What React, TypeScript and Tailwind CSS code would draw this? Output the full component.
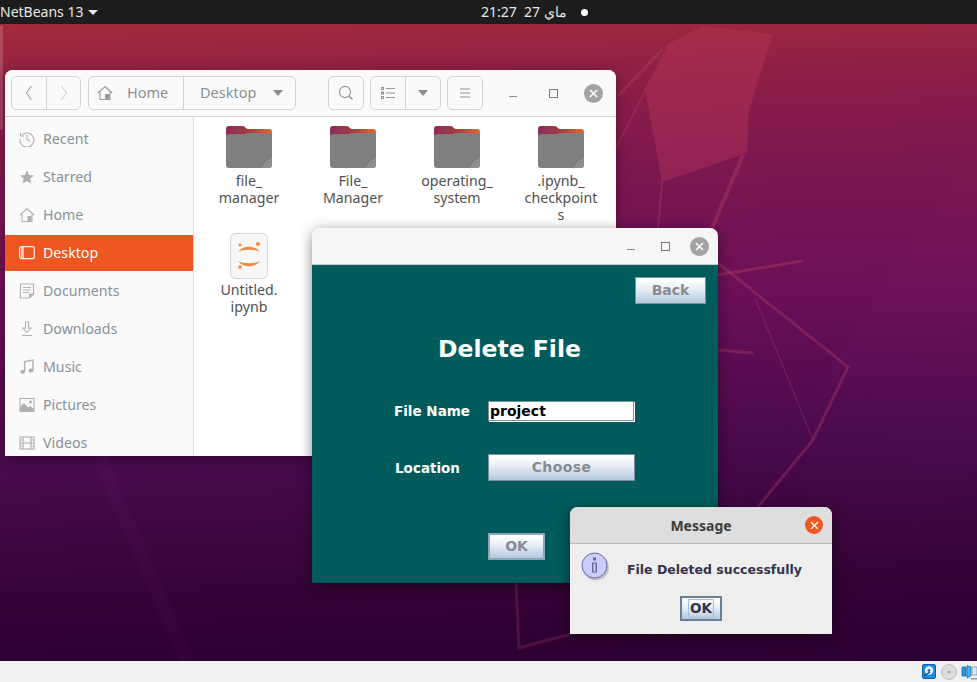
import React from "react";

const ui = "font-['Noto_Sans','Open_Sans',sans-serif]";
const java = "font-['DejaVu_Sans',sans-serif]";

function Wallpaper() {
  return (
    <svg className="absolute inset-0 h-full w-full" viewBox="0 0 977 637" fill="none">
      <defs>
        <linearGradient id="sheen" x1="1" y1="0.1" x2="0.55" y2="1">
          <stop offset="0" stopColor="#ff5a6a" stopOpacity="0.03" />
          <stop offset="0.5" stopColor="#7a1a80" stopOpacity="0.1" />
          <stop offset="1" stopColor="#000" stopOpacity="0" />
        </linearGradient>
      </defs>
      <path d="M977 120 L977 440 L800 637 L640 637 Z" fill="url(#sheen)" opacity="0.5" />
      <g transform="translate(0,-24)">
        <path d="M668 44 L703 26 L773 34 L749 110 L747 153 L662 182 L645 89 Z" fill="#c9405f" fillOpacity="0.3" />
        <g stroke="#c24a6e" strokeOpacity="0.3">
          <path d="M663 49 L618 96" strokeWidth="3" />
          <path d="M645 91 L617 147" strokeWidth="1.5" />
          <path d="M662 182 L658 228" strokeWidth="2" />
          <path d="M743 155 L712 228" strokeWidth="4" />
          <path d="M718 263 L848 367 L813 440 L757 508" strokeWidth="3" />
          <path d="M755 298 L813 440" strokeWidth="1.2" />
          <path d="M718 275 L802 261" strokeWidth="3" />
          <path d="M718 350 L753 353" strokeWidth="3" />
          <path d="M516 583 L519 648 L578 632" strokeWidth="3" strokeOpacity="0.22" />
        </g>
        <path d="M99 457 L187 661" stroke="#a0409a" strokeOpacity="0.05" strokeWidth="14" />
        <path d="M1.5 26 L1.5 130" stroke="#e8b0b8" strokeOpacity="0.25" strokeWidth="3" />
      </g>
    </svg>
  );
}

function Folder() {
  return (
    <svg width="46" height="42" viewBox="0 0 46 42">
      <defs>
        <linearGradient id="tab" x1="0" y1="0" x2="1" y2="0">
          <stop offset="0" stopColor="#8a2a58" />
          <stop offset="0.55" stopColor="#a8433f" />
          <stop offset="1" stopColor="#e9662c" />
        </linearGradient>
      </defs>
      <path d="M3 0 H17 C19 0 20 3 22 3 H43 C45 3 46 4 46 6 V20 H0 V3 C0 1 1 0 3 0 Z" fill="url(#tab)" />
      <path d="M3 8 H18 C20 8 21 7 23 7 H43 C45 7 46 8 46 10 V39 C46 41 45 42 43 42 H3 C1 42 0 41 0 39 V10 C0 9 1 8 3 8 Z" fill="#7f7f7f" />
      <path d="M46 30 L34 42 H43 C45 42 46 41 46 39 Z" fill="#8e8e8e" />
    </svg>
  );
}

function Jupyter() {
  return (
    <svg width="38" height="46" viewBox="0 0 38 46">
      <rect x="0.5" y="0.5" width="37" height="45" rx="5" fill="#f7f7f7" stroke="#d2d2d2" />
      <path d="M8 19 C13 12 25 12 30 19 C25 16 13 16 8 19 Z" fill="#f08a45" />
      <path d="M8 28 C13 35 25 35 30 28 C25 31 13 31 8 28 Z" fill="#f08a45" />
      <circle cx="10" cy="12" r="1.6" fill="#f08a45" />
      <circle cx="28" cy="11" r="2" fill="#f08a45" />
      <circle cx="10" cy="34" r="1.8" fill="#f08a45" />
    </svg>
  );
}

const s = { stroke: "#b0b0b0", fill: "none", strokeWidth: 1.1 };

function SideIcon({ name }: { name: string }) {
  const c = "#b0b0b0";
  return (
    <svg width="16" height="16" viewBox="0 0 16 16" className="shrink-0">
      {name === "Recent" && (
        <g {...s}>
          <path d="M2.6 4.5 A7 7 0 1 1 1 8" />
          <path d="M1.5 1.8 V5 H4.7" />
          <path d="M8 4 V8.2 L10.8 10" />
        </g>
      )}
      {name === "Starred" && <path d="M8 1.3 L10 6 L15 6.4 L11.2 9.6 L12.4 14.6 L8 12 L3.6 14.6 L4.8 9.6 L1 6.4 L6 6 Z" fill={c} />}
      {name === "Home" && (
        <g {...s}>
          <path d="M1 8 L8 1.5 L15 8" />
          <path d="M3 6.5 V14.5 H13 V6.5" />
          <path d="M9 14.5 V9.5 H12 V14.5" fill={c} />
        </g>
      )}
      {name === "Desktop" && (
        <g>
          <rect x="0.7" y="1.7" width="14.6" height="12" rx="2" fill="none" stroke="#fff" strokeWidth="1.2" opacity="0.9" />
          <path d="M2 2 H5 V13.5 H2 Z" fill="#fff" opacity="0.65" />
        </g>
      )}
      {name === "Documents" && (
        <g {...s}>
          <path d="M1.5 1 H14.5 V11 L10.5 15 H1.5 Z" />
          <path d="M4 4.5 H12 M4 7 H12 M4 9.5 H10" />
          <path d="M10.5 15 V11 H14.5" fill={c} />
        </g>
      )}
      {name === "Downloads" && (
        <g {...s}>
          <path d="M6.5 1 H9.5 V7 H12 L8 11.5 L4 7 H6.5 Z" />
          <path d="M3 14.5 H13" />
        </g>
      )}
      {name === "Music" && (
        <g>
          <path d="M5.6 12.5 V2.5 L14 1 V11" fill="none" stroke={c} strokeWidth="1.4" />
          <ellipse cx="3.6" cy="12.8" rx="2.4" ry="2" fill={c} />
          <ellipse cx="12" cy="11.5" rx="2.4" ry="2" fill={c} />
        </g>
      )}
      {name === "Pictures" && (
        <g>
          <rect x="1" y="1.5" width="14" height="13" fill="none" stroke={c} strokeWidth="1.1" />
          <path d="M1 14.5 V10 L5 6 L9 10.5 L11 9 L15 12 V14.5 Z" fill={c} />
          <circle cx="11.5" cy="5" r="1.4" fill={c} />
        </g>
      )}
      {name === "Videos" && (
        <g {...s}>
          <rect x="1" y="2" width="14" height="12" />
          <path d="M4 2 V14 M12 2 V14 M1 5 H4 M1 8 H4 M1 11 H4 M12 5 H15 M12 8 H15 M12 11 H15 M4 8 H12" />
        </g>
      )}
    </svg>
  );
}

function HeaderBtn({ className, children }: { className?: string; children?: React.ReactNode }) {
  return <div className={`flex h-[34px] items-center justify-center border border-[#d4d4d4] bg-[#fafafa] ${className ?? ""}`}>{children}</div>;
}

function WinControls({ gapA, gapB }: { gapA: string; gapB: string }) {
  return (
    <div className="flex items-center">
      <div className="mt-[6px] h-px w-2 bg-[#8a8a8a]" />
      <div className={`h-[9px] w-[9px] border border-[#7a7a7a] ${gapA}`} />
      <div className={`flex h-[19px] w-[19px] items-center justify-center rounded-full bg-[#a3a3a3] ${gapB}`}>
        <svg width="9" height="9" viewBox="0 0 9 9" stroke="#fff" strokeWidth="1.5"><path d="M1 1 L8 8 M8 1 L1 8" /></svg>
      </div>
    </div>
  );
}

function FilesWindow() {
  const items = ["Recent", "Starred", "Home", "Desktop", "Documents", "Downloads", "Music", "Pictures", "Videos"];
  const files = [
    ["file_", "manager"],
    ["File_", "Manager"],
    ["operating_", "system"],
    [".ipynb_", "checkpoint", "s"],
  ];
  return (
    <div className={`absolute left-[5px] top-[46px] flex h-[386px] w-[611px] flex-col overflow-hidden rounded-t-[8px] bg-white shadow-[0_3px_14px_rgba(0,0,0,0.35)] ${ui}`}>
      <div className="flex h-[47px] shrink-0 items-center border-b border-[#d2d2d2] bg-[#fafafa] pl-[6px] pr-[13px]">
        <HeaderBtn className="w-[70px] justify-start rounded-[5px] !items-stretch">
          <div className="flex w-[35px] items-center justify-center border-r border-[#d4d4d4]">
            <svg width="8" height="16" viewBox="0 0 8 16" fill="none" stroke="#8c8c8c"><path d="M6.5 1 L1.5 8 L6.5 15" /></svg>
          </div>
          <div className="flex flex-1 items-center justify-center">
            <svg width="8" height="16" viewBox="0 0 8 16" fill="none" stroke="#c4c4c4"><path d="M1.5 1 L6.5 8 L1.5 15" /></svg>
          </div>
        </HeaderBtn>
        <HeaderBtn className="ml-[7px] w-[208px] justify-start rounded-[5px] !items-stretch text-[14.5px] text-[#8b9094]">
          <div className="flex w-[95px] items-center border-r border-[#d4d4d4] pl-[8px]">
            <svg width="16" height="16" viewBox="0 0 16 16" fill="none" stroke="#9a9a9a" strokeWidth="1.1">
              <path d="M0.8 8 L8 1.5 L15.2 8" />
              <path d="M3 6.5 V14.5 H13 V6.5" />
              <path d="M8.5 14.5 V9.5 H12 V14.5" fill="#9a9a9a" />
            </svg>
            <span className="ml-[14px]">Home</span>
          </div>
          <div className="flex flex-1 items-center pl-[16px]">
            <span>Desktop</span>
            <svg className="ml-[17px]" width="10" height="6" viewBox="0 0 10 6" fill="#8c8c8c"><path d="M0 0 H10 L5 6 Z" /></svg>
          </div>
        </HeaderBtn>
        <HeaderBtn className="ml-[32px] w-[36px] rounded-[5px]">
          <svg width="16" height="16" viewBox="0 0 16 16" fill="none" stroke="#949494" strokeWidth="1.1">
            <circle cx="7" cy="7" r="5.6" />
            <path d="M11 11 L14.5 14.5" strokeWidth="1.5" />
          </svg>
        </HeaderBtn>
        <HeaderBtn className="ml-[6px] w-[71px] rounded-[5px] !items-stretch">
          <div className="flex w-[35px] items-center justify-center border-r border-[#d4d4d4]">
            <svg width="14" height="12" viewBox="0 0 14 12" fill="none" stroke="#949494">
              <path d="M5 1.5 H14 M5 6 H14 M5 10.5 H14" />
              <rect x="0.5" y="0.5" width="2" height="2" />
              <rect x="0.5" y="5" width="2" height="2" />
              <rect x="0.5" y="9.5" width="2" height="2" />
            </svg>
          </div>
          <div className="flex flex-1 items-center justify-center">
            <svg width="10" height="6" viewBox="0 0 10 6" fill="#8c8c8c"><path d="M0 0 H10 L5 6 Z" /></svg>
          </div>
        </HeaderBtn>
        <HeaderBtn className="ml-[6px] w-[36px] rounded-[5px]">
          <svg width="12" height="10" viewBox="0 0 12 10" stroke="#949494"><path d="M1 1 H11 M1 5 H11 M1 9 H11" /></svg>
        </HeaderBtn>
        <div className="ml-auto">
          <WinControls gapA="ml-[32px]" gapB="ml-[26px]" />
        </div>
      </div>
      <div className="flex min-h-0 flex-1">
        <div className="w-[189px] shrink-0 border-r border-[#dcdcdc] bg-[#fafafa] pt-[3px] text-[14.2px]">
          {items.map((n) => (
            <div
              key={n}
              className={
                n === "Desktop"
                  ? "my-px flex h-[36px] items-center gap-[8px] bg-[#ee5622] pl-[14px] text-white"
                  : "flex h-[38px] items-center gap-[8px] pl-[14px] text-[#86929a]"
              }
            >
              <SideIcon name={n} />
              <span>{n}</span>
            </div>
          ))}
        </div>
        <div className="flex-1 pl-[3px] pt-[9px]">
          <div className="grid w-[416px] grid-cols-[repeat(4,104px)] auto-rows-[107px] text-[14.2px] leading-[17px] text-[#505050]">
            {files.map((f) => (
              <div key={f[0]} className="flex flex-col items-center">
                <Folder />
                <div className="mt-[4px] text-center">
                  {f.map((l) => (
                    <div key={l}>{l}</div>
                  ))}
                </div>
              </div>
            ))}
            <div className="flex flex-col items-center">
              <Jupyter />
              <div className="mt-[2px] text-center">
                <div>Untitled.</div>
                <div>ipynb</div>
              </div>
            </div>
          </div>
        </div>
      </div>
    </div>
  );
}

const metalBtn = "flex items-center justify-center bg-[linear-gradient(to_bottom,#ffffff_5%,#e6edf5_45%,#b4c9de_100%)] font-bold";

function DeleteWindow() {
  return (
    <div className={`absolute left-[312px] top-[204px] flex h-[355px] w-[406px] flex-col overflow-hidden rounded-t-[8px] shadow-[0_3px_14px_rgba(0,0,0,0.45)] ${java}`}>
      <div className="flex h-[37px] shrink-0 items-center justify-end border-b border-[#c8c8c8] bg-[#f6f6f6] pr-[9px]">
        <WinControls gapA="ml-[26px]" gapB="ml-[20px]" />
      </div>
      <div className="flex-1 bg-[#005c5c] pt-[12px]">
        <div className="flex justify-end pr-[12px]">
          <div className={`${metalBtn} h-[27px] w-[71px] border border-[#7d8fa0] text-[14px] text-[#868c92]`}>Back</div>
        </div>
        <div className="mt-[30px] pl-[126px] text-[23.5px] font-bold leading-[30px] text-white">Delete File</div>
        <div className="mt-[37px] flex items-center pl-[82px]">
          <div className="w-[94px] text-[13.5px] font-bold text-white">File Name</div>
          <div className="flex h-[20px] w-[146px] items-center border border-[#7d8fa0] bg-white pl-px text-[14px] font-bold leading-none text-black shadow-[1px_1px_0_#fff]">project</div>
        </div>
        <div className="mt-[33px] flex items-center pl-[83px]">
          <div className="w-[93px] text-[13.5px] font-bold text-white">Location</div>
          <div className={`${metalBtn} h-[27px] w-[147px] border border-[#7d8fa0] text-[14px] tracking-[0.4px] text-[#868c92]`}>Choose</div>
        </div>
        <div className="ml-[176px] mt-[52px]">
          <div className={`${metalBtn} h-[27px] w-[57px] border-2 border-[#8fa5ba] text-[14px] text-[#868c92]`}>OK</div>
        </div>
      </div>
    </div>
  );
}

function MessageWindow() {
  return (
    <div className={`absolute left-[570px] top-[483px] flex h-[127px] w-[262px] flex-col overflow-hidden rounded-t-[8px] bg-[#eeeeee] shadow-[0_3px_16px_rgba(0,0,0,0.45)] ${java}`}>
      <div className={`relative flex h-[37px] shrink-0 items-center justify-center border-b border-[#bdbdbd] bg-[#dedede] pt-px text-[14px] font-bold text-[#3c3c3c] ${ui}`}>
        Message
        <div className="absolute right-[9px] top-[9px] flex h-[18px] w-[18px] items-center justify-center rounded-full bg-[#ee5622]">
          <svg width="9" height="9" viewBox="0 0 9 9" stroke="#fff" strokeWidth="1.4"><path d="M1 1 L8 8 M8 1 L1 8" /></svg>
        </div>
      </div>
      <div className="flex items-center pl-[11px] pt-[8px]">
        <svg width="30" height="30" viewBox="0 0 30 30" className="shrink-0">
          <circle cx="15" cy="15.5" r="13" fill="#000" opacity="0.18" />
          <circle cx="13.5" cy="13.5" r="12.5" fill="#ccccff" stroke="#6666a0" strokeWidth="1" />
          <rect x="11" y="10.5" width="5" height="10" fill="#6666a0" />
          <rect x="12" y="5.5" width="3" height="3" fill="#6666a0" />
          <rect x="12.5" y="11.5" width="2" height="8" fill="#ccccff" />
        </svg>
        <div className="ml-[16px] pt-[6px] text-[12.5px] font-bold text-[#33334d]">File Deleted successfully</div>
      </div>
      <div className="mt-[14px] flex justify-center">
        <div className={`${metalBtn} h-[25px] w-[42px] border-2 border-[#6c7f92] text-[13.5px] text-[#33334d]`}>
          <span className="border border-[#a9bfd5] px-px leading-[17px]">OK</span>
        </div>
      </div>
    </div>
  );
}

function StatusIcons() {
  return (
    <div className="flex items-center justify-end">
      <svg width="14" height="15" viewBox="0 0 14 15" className="mr-[5px]">
        <rect x="0.5" y="0.5" width="13" height="14" rx="1.5" fill="#1a8ee0" stroke="#0e5fa8" />
        <circle cx="7" cy="6.5" r="4.2" fill="#e8f4fc" />
        <circle cx="7" cy="6.5" r="1.4" fill="#1a6fb8" />
        <path d="M2 12 L8 8" stroke="#0e4f88" strokeWidth="1.5" />
      </svg>
      <svg width="16" height="16" viewBox="0 0 16 16" className="mr-[4px]">
        <circle cx="8" cy="8" r="7.5" fill="#dcdcdc" stroke="#c2c2c2" />
        <circle cx="8" cy="8" r="1.6" fill="#a8a8a8" />
      </svg>
      <svg width="16" height="16" viewBox="0 0 16 16">
        <path d="M1 3 H5 V12 H1 Z" fill="#1f96e6" stroke="#0e5fa8" strokeWidth="0.7" />
        <path d="M6 1.5 L10 3 V12 L6 14 Z" fill="#4ab0f0" stroke="#0e5fa8" strokeWidth="0.7" />
        <path d="M11 3 H16 V11 H11 Z" fill="#d8e8f4" stroke="#7a8a99" strokeWidth="0.7" />
        <path d="M10 14 H16 V15.5 H10 Z" fill="#9a9a9a" />
      </svg>
    </div>
  );
}

export default function App() {
  return (
    <div className="flex h-[682px] w-[977px] flex-col overflow-hidden bg-[#f0f0f0]">
      <div className={`relative flex h-[24px] shrink-0 items-center bg-[#1d1d1d] text-[14px] text-[#e8e8e8] ${ui}`}>
        <span className="leading-none">NetBeans 13</span>
        <svg className="ml-[5px]" width="10" height="5" viewBox="0 0 10 5" fill="#e8e8e8"><path d="M0 0 H10 L5 5 Z" /></svg>
        <div className="absolute left-[481px] top-0 flex h-[24px] items-center">
          <span dir="rtl" className="w-[87px] whitespace-pre text-left leading-none">ماي 27  21:27</span>
          <span className="ml-[13px] h-[7px] w-[7px] rounded-full bg-white" />
        </div>
      </div>
      <div className="relative h-[637px] shrink-0 overflow-hidden bg-[linear-gradient(178deg,#a52a3c_0%,#8f2045_10%,#7c1750_25%,#6a0f57_45%,#4a0a4c_66%,#350436_86%,#2a0030_100%)]">
        <Wallpaper />
        <FilesWindow />
        <DeleteWindow />
        <MessageWindow />
      </div>
      <div className="flex h-[21px] flex-1 items-center justify-end bg-[#f0f0f0]">
        <StatusIcons />
      </div>
    </div>
  );
}
